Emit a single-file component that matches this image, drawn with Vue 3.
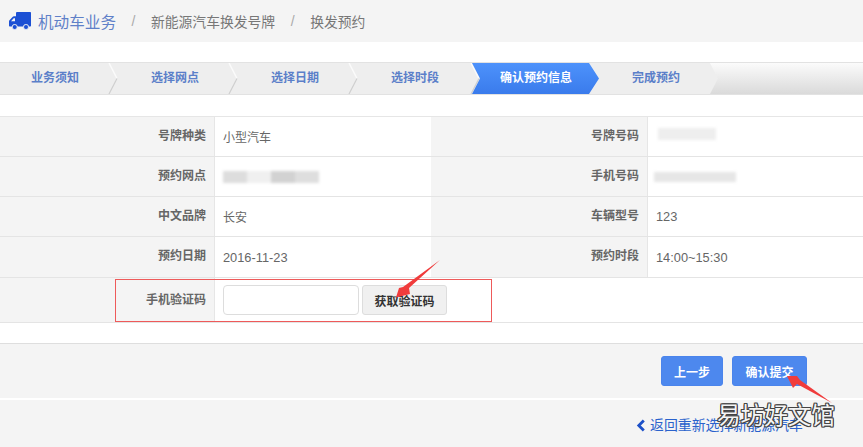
<script setup>
const steps = [
  { label: '业务须知', width: 110, pad: 31 },
  { label: '选择网点', width: 120, pad: 41 },
  { label: '选择日期', width: 120, pad: 41 },
  { label: '选择时段', width: 122, pad: 41 }
]

const rows = [
  [
    { label: '号牌种类', value: '小型汽车' },
    { label: '号牌号码', mask: 'plate' }
  ],
  [
    { label: '预约网点', mask: 'site' },
    { label: '手机号码', mask: 'phone' }
  ],
  [
    { label: '中文品牌', value: '长安' },
    { label: '车辆型号', value: '123', num: true }
  ],
  [
    { label: '预约日期', value: '2016-11-23', num: true },
    { label: '预约时段', value: '14:00~15:30', num: true }
  ]
]
</script>

<template>
  <div class="page">
    <div class="crumbs">
      <svg class="truck" viewBox="0 0 22 18" width="22" height="18">
        <path fill="#1c50d4" d="M7 1.200C7 .5 7.500 0 8.200 0H21c.6 0 1 .4 1 1v12.400c0 .6-.4 1-1 1h-1.100a3 3 0 0 0-5.800 0H8.600a3 3 0 0 0-5.700 0H1c-.6 0-1-.4-1-1V9.500c0-.5.200-.9.500-1.200l3.300-3.500c.3-.3.700-.5 1.100-.5H7z" />
        <path fill="#f4f4f4" d="M2 9.200 4.700 6.200H6V9.200z" />
        <circle cx="5.700" cy="15" r="2.500" fill="#1c50d4" stroke="#f4f4f4" stroke-width=".8" />
        <circle cx="17" cy="15" r="2.500" fill="#1c50d4" stroke="#f4f4f4" stroke-width=".8" />
      </svg>
      <a class="crumb-home">机动车业务</a>
      <span class="slash">/</span>
      <span class="crumb">新能源汽车换发号牌</span>
      <span class="slash">/</span>
      <span class="crumb">换发预约</span>
    </div>

    <div class="steps">
      <div
        v-for="step in steps"
        :key="step.label"
        class="step"
        :style="{ width: step.width + 'px', paddingLeft: step.pad + 'px' }"
      >
        {{ step.label }}
        <svg class="sep" viewBox="0 0 12 31" width="12" height="31">
          <path d="M1 0 9 15.500 1 31" fill="#eeeeee" />
          <path d="M1 0 9 15.500" fill="none" stroke="#fbfbfb" stroke-width="1.500" />
          <path d="M9 15.500 1 31" fill="none" stroke="#cfcfcf" stroke-width="1.200" />
        </svg>
      </div>
      <div class="step step-active">确认预约信息</div>
      <div class="step step-last">
        完成预约
        <svg class="sep" viewBox="0 0 12 31" width="12" height="31">
          <path d="M0 0H1L9 15.500 1 31H0z" fill="#eeeeee" />
        </svg>
      </div>
      <div class="step-fill"></div>
    </div>

    <div class="info">
      <div v-for="(row, i) in rows" :key="i" class="row">
        <template v-for="cell in row" :key="cell.label">
          <div class="label">{{ cell.label }}</div>
          <div class="value">
            <span v-if="cell.value" :class="{ num: cell.num }">{{ cell.value }}</span>
            <div v-else class="mask" :class="'mask-' + cell.mask">
              <i></i><i></i><i></i><i></i>
            </div>
          </div>
        </template>
      </div>
      <div class="row row-code">
        <div class="label">手机验证码</div>
        <div class="code">
          <input class="code-input" type="text" />
          <button class="code-btn" type="button">获取验证码</button>
        </div>
      </div>
      <div class="red-box"></div>
      <svg class="arrow arrow-code" viewBox="0 0 50 42" width="50" height="42">
        <path d="M46 2 9 29 5 30 2 39.500 16 36 15 30z" fill="#f03c3c" />
      </svg>
    </div>

    <div class="actions">
      <button class="btn" type="button">上一步</button>
      <button class="btn btn-submit" type="button">确认提交</button>
    </div>

    <div class="back">
      <a class="back-link">
        <svg viewBox="0 0 10 13" width="10" height="13">
          <path d="M7.800 1.500 2.800 6.500 7.800 11.500" fill="none" stroke="#1c50c8" stroke-width="2.800" />
        </svg>
        返回重新选择新能源汽车
      </a>
      <span class="watermark">易坊好文馆</span>
      <svg class="arrow arrow-submit" viewBox="0 0 50 34" width="50" height="34">
        <path d="M47 32 15 9 12 5 2 5 8 17 12 13z" fill="#f03c3c" />
      </svg>
    </div>
  </div>
</template>

<style scoped>
.page {
  position: relative;
  width: 863px;
  height: 447px;
  overflow: hidden;
  background: #fff;
  font-family: "Liberation Sans", "Noto Sans CJK SC", sans-serif;
  font-size: 12px;
  color: #666;
}

.crumbs {
  display: flex;
  align-items: center;
  height: 42px;
  padding-left: 9px;
  background: #f4f4f4;
  box-sizing: border-box;
}

.truck {
  margin-right: 7px;
}

.crumb-home {
  font-size: 15.600px;
  color: #5f80c8;
}

.crumb {
  font-size: 13.800px;
  color: #777;
}

.slash {
  width: 35px;
  text-align: center;
  font-size: 14px;
  color: #aaa;
}

.steps {
  display: flex;
  height: 33px;
  margin-top: 20px;
  background: #eee;
  border-top: 1px solid #e2e2e2;
  border-bottom: 1px solid #e2e2e2;
  box-sizing: border-box;
}

.step {
  position: relative;
  box-sizing: border-box;
  line-height: 31px;
  font-weight: 700;
  color: #5b7fc9;
  background: #eee;
}

.sep {
  position: absolute;
  top: 0;
  left: 100%;
  margin-left: -2px;
  z-index: 1;
}

.step-active {
  z-index: 2;
  width: 127px;
  margin-right: -10px;
  padding-left: 28px;
  color: #fff;
  background: linear-gradient(#4d92fb, #3a7bec);
  clip-path: polygon(0 0, 117px 0, 100% 50%, 117px 100%, 0 100%, 8px 50%);
}

.step-last {
  width: 121px;
  padding-left: 43px;
}

.step-last .sep {
  margin-left: -1px;
}

.step-fill {
  flex: 1;
  background: linear-gradient(#fbfbfb, #dadada);
}

.info {
  position: relative;
  margin-top: 21px;
  border-top: 1px solid #e6e6e6;
  border-bottom: 1px solid #e4e4e4;
}

.row {
  display: grid;
  grid-template-columns: 215px 216px 217px 215px;
  height: 39px;
  border-bottom: 1px solid #e4e4e4;
}

.row:nth-child(4) {
  height: 40px;
}

.label {
  padding-right: 8px;
  text-align: right;
  line-height: 38px;
  font-weight: 700;
  color: #666;
  background: #f4f4f4;
  border-right: 1px solid #e6e6e6;
}

.value {
  display: flex;
  align-items: center;
  padding-left: 8px;
  font-size: 12px;
  color: #666;
}

.num {
  font-size: 12.800px;
}

.mask {
  display: flex;
  filter: blur(1.500px);
}

.mask i {
  display: block;
  flex: 1;
  height: 100%;
  background: #e6e6e6;
}

.mask-plate {
  width: 58px;
  height: 12px;
  margin-left: 2px;
  margin-top: -5px;
}

.mask-plate i {
  background: #eeeeee;
}

.mask-site {
  width: 96px;
  height: 12px;
}

.mask-site i:nth-child(1) {
  background: #dddddd;
}

.mask-site i:nth-child(2) {
  background: #f0f0f0;
}

.mask-site i:nth-child(3) {
  background: #d2d2d2;
}

.mask-site i:nth-child(4) {
  background: #dedede;
}

.mask-phone {
  width: 82px;
  height: 10px;
  margin-left: -2px;
}

.row-code {
  grid-template-columns: 215px 1fr;
  height: 44px;
  border-bottom: 0;
}

.row-code .label {
  line-height: 44px;
}

.code {
  display: flex;
  align-items: center;
  gap: 3px;
  padding-left: 8px;
}

.code-input {
  width: 136px;
  height: 30px;
  box-sizing: border-box;
  border: 1px solid #ddd;
  border-radius: 4px;
  background: #fff;
}

.code-btn {
  width: 85px;
  height: 30px;
  padding: 0;
  border: 1px solid #ddd;
  border-radius: 3px;
  background: #f0f0f0;
  font-family: inherit;
  font-size: 12px;
  font-weight: 700;
  color: #333;
}

.red-box {
  position: absolute;
  left: 115px;
  top: 162px;
  width: 377px;
  height: 43px;
  box-sizing: border-box;
  border: 1px solid #ee5a5a;
}

.arrow {
  position: absolute;
}

.arrow-code {
  left: 394px;
  top: 141px;
}

.actions {
  display: flex;
  justify-content: flex-end;
  align-items: center;
  gap: 9px;
  height: 54px;
  margin-top: 20px;
  padding-right: 56px;
  background: #f4f4f4;
  border-top: 1px solid #dedede;
}

.btn {
  width: 62px;
  height: 30px;
  padding: 0;
  border: 1px solid #4a84ec;
  border-radius: 3px;
  background: #4d88ee;
  font-family: inherit;
  font-size: 12px;
  font-weight: 700;
  color: #fff;
}

.btn-submit {
  width: 75px;
}

.back {
  position: relative;
  height: 48px;
  margin-top: 2px;
  background: #f4f4f4;
}

.back-link {
  position: absolute;
  left: 636px;
  top: 17px;
  display: flex;
  align-items: center;
  gap: 4px;
  font-size: 13.900px;
  line-height: 16px;
  color: #2a62cc;
  white-space: nowrap;
}

.watermark {
  position: absolute;
  left: 717px;
  top: 1px;
  font-size: 23.600px;
  line-height: 30px;
  color: #f4f4f4;
  text-shadow: 1px 0 0 #444, -1px 0 0 #444, 0 1px 0 #444, 0 -1px 0 #444, 1px 1px 0 #444, -1px -1px 0 #444, 1px -1px 0 #444, -1px 1px 0 #444;
  white-space: nowrap;
}

.arrow-submit {
  left: 785px;
  top: -29px;
}
</style>
